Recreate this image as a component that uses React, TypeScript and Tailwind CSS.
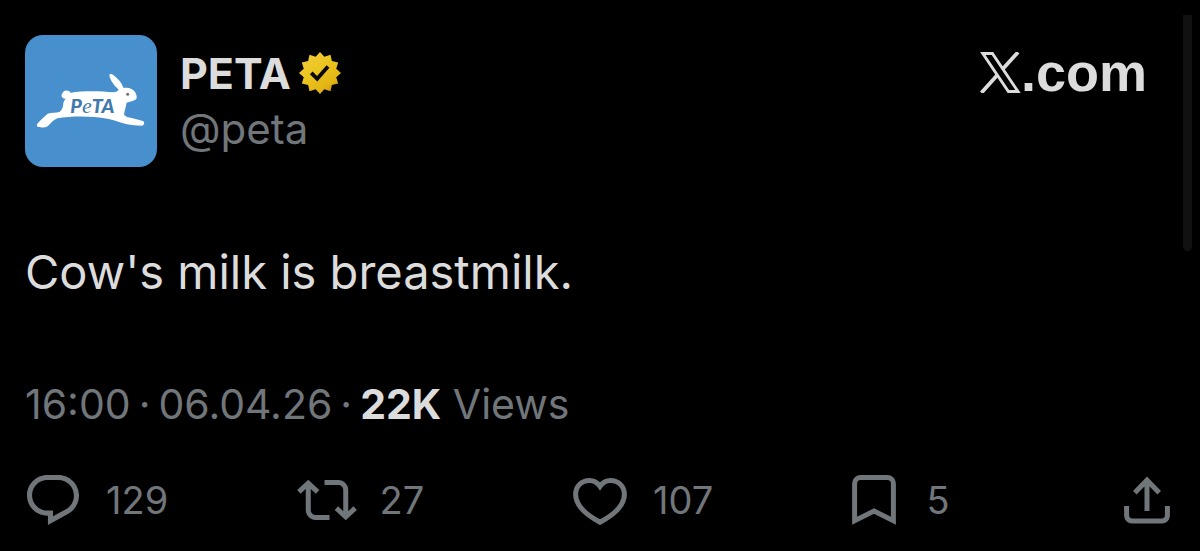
import type { ReactNode } from "react";

function RabbitLogo() {
  return (
    <svg viewBox="30 28 396 396" className="block h-full w-full" aria-hidden="true">
      <path
        fill="#fff"
        d="M150 195c8-1 14 2 17 6 38-6 90-5 128-1 9-1 13-4 16-8-13-12-26-28-28-44 2-5 8-3 13 1 13 10 25 24 30 38 14-3 28 2 34 12 4 6 6 13 5 19-5 9-18 9-30 13-3 11-5 23-8 35 2 4 6 7 12 9 15 3 31 7 45 11 6 4 4 12-2 14-20 0-42-2-60-8-17-6-31-10-45-13-46-8-108-8-150-1-11 4-20 15-29 24-7 4-16 5-23 2-10 1-12-5-6-12 9-11 19-19 29-28 12-4 24-2 35-5 9-6 12-17 12-27 1-5 4-9 7-13-8 0-14-6-12-12 2-5 5-11 10-12z"
      />
      <circle cx="338" cy="206" r="4.5" fill="#7d6f70" />
      <text x="166" y="261" fill="#4079ae" fontFamily="Lato, sans-serif" fontSize="59" fontWeight="900" fontStyle="italic">
        P<tspan fontFamily="Liberation Serif, serif" fontWeight="400" fontSize="66">e</tspan>TA
      </text>
    </svg>
  );
}

const badgePoints = Array.from({ length: 24 }, (_, i) => {
  const radius = i % 2 === 0 ? 21 : 16.8;
  const angle = (i * Math.PI) / 12;
  return `${(21 + radius * Math.sin(angle)).toFixed(2)},${(21 - radius * Math.cos(angle)).toFixed(2)}`;
}).join(" ");

function GoldBadge() {
  return (
    <svg viewBox="0 0 42 42" className="size-[42px]" role="img" aria-label="Verified organization">
      <defs>
        <linearGradient id="gold" x1="0.1" y1="0" x2="0.8" y2="1">
          <stop offset="0" stopColor="#f0cd3c" />
          <stop offset="0.45" stopColor="#ebc51f" />
          <stop offset="0.8" stopColor="#e3b515" />
          <stop offset="1" stopColor="#c98a12" />
        </linearGradient>
      </defs>
      <polygon points={badgePoints} fill="url(#gold)" />
      <path d="M12.2 20.8l6 6L29 14.4" fill="none" stroke="#0b0800" strokeWidth="3.8" />
    </svg>
  );
}

function XLogo() {
  return (
    <svg viewBox="0 0 41 41" className="h-[41px] w-[41px]" role="img" aria-label="X">
      <g fill="none" stroke="currentColor" strokeWidth="2.9">
        <path d="M2.8 1.5h9.6L38 39.5h-9.6z" />
        <path d="M38 .2L22.3 17.6M17.6 22.8L1.4 40.8" strokeWidth="3.8" />
      </g>
    </svg>
  );
}

function ReplyIcon() {
  return (
    <svg viewBox="1.75 2 20.5 19.7" className="h-[50px] w-[52px]" fill="currentColor" aria-hidden="true">
      <path d="M1.751 10c0-4.42 3.584-8 8.005-8h4.366c4.49 0 8.129 3.64 8.129 8.13 0 2.96-1.607 5.68-4.196 7.11l-8.054 4.46v-3.69h-.067c-4.49.1-8.183-3.51-8.183-8.01zm8.005-6c-3.317 0-6.005 2.69-6.005 6 0 3.37 2.77 6.08 6.138 6.01l.351-.01h1.761v2.3l5.087-2.81c1.951-1.08 3.163-3.13 3.163-5.36 0-3.39-2.744-6.13-6.129-6.13H9.756z" />
    </svg>
  );
}

function RepostIcon() {
  return (
    <svg viewBox="0 0 24 24" className="size-[60px]" fill="currentColor" aria-hidden="true">
      <path d="M4.5 3.88l4.432 4.14-1.364 1.46L5.5 7.55V16c0 1.1.896 2 2 2H13v2H7.5c-2.209 0-4-1.79-4-4V7.55L1.432 9.48.068 8.02 4.5 3.88zM16.5 6H11V4h5.5c2.209 0 4 1.79 4 4v8.45l2.068-1.93 1.364 1.46-4.432 4.14-4.432-4.14 1.364-1.46 2.068 1.93V8c0-1.1-.896-2-2-2z" />
    </svg>
  );
}

function HeartIcon() {
  return (
    <svg viewBox="0 0 54 50" className="h-[50px] w-[54px]" fill="none" stroke="currentColor" strokeWidth="5" aria-hidden="true">
      <path d="M27 11.3C24.6 7.7 20.8 5.5 16.4 5.5 8.9 5.5 2.6 11 2.6 19.6 2.6 31.4 14.6 40.6 27 47.2 39.4 40.6 51.4 31.4 51.4 19.6 51.4 11 45.1 5.5 37.6 5.5 33.2 5.5 29.4 7.7 27 11.3z" />
    </svg>
  );
}

function BookmarkIcon() {
  return (
    <svg viewBox="0 0 44 50" className="h-[50px] w-[44px]" fill="none" stroke="currentColor" strokeWidth="5" aria-hidden="true">
      <path d="M2.6 45.8V8.5a6 6 0 0 1 6-6h26.8a6 6 0 0 1 6 6v37.3L22 36z" />
    </svg>
  );
}

function ShareIcon() {
  return (
    <svg viewBox="0 0 46 50" className="h-[50px] w-[46px]" fill="none" stroke="currentColor" strokeWidth="5" aria-hidden="true">
      <path d="M23 36V5M10.8 17.8L23 5.2l12.2 12.6M2.6 31v9.5a5.5 5.5 0 0 0 5.5 5.5h29.8a5.5 5.5 0 0 0 5.5-5.5V31" />
    </svg>
  );
}

function Action({ label, icon, count }: { label: string; icon: ReactNode; count?: string }) {
  return (
    <button type="button" aria-label={label} className="flex items-center gap-[23px]">
      <span className="flex size-[60px] shrink-0 items-center justify-center">{icon}</span>
      {count && <span className="text-[38px] leading-[62px]">{count}</span>}
    </button>
  );
}

export default function App() {
  return (
    <main className="relative min-h-screen bg-black font-[Inter,sans-serif] text-[#dcdcdc]">
      <article className="pt-[35px]">
        <header className="flex items-start justify-between pr-[53px] pl-[25px]">
          <div className="flex gap-[23px]">
            <a href="#peta" aria-label="PETA profile" className="block size-[132px] shrink-0 overflow-hidden rounded-[18px] bg-[#478fcd]">
              <RabbitLogo />
            </a>
            <div className="pt-[10px]">
              <div className="flex items-center gap-2">
                <h1 className="text-[43px] leading-[56px] font-bold">PETA</h1>
                <GoldBadge />
              </div>
              <a href="#peta" className="block text-[42px] leading-[56px] text-[#71767b]">
                @peta
              </a>
            </div>
          </div>
          <div className="flex items-center pt-[17px]">
            <XLogo />
            <span className="font-['Liberation_Sans',Arial,sans-serif] text-[54px] leading-[41px] font-bold">.com</span>
          </div>
        </header>

        <p className="mt-[75px] px-[25px] text-[47px] leading-[60px]">Cow's milk is breastmilk.</p>

        <div className="mt-[72px] flex flex-wrap gap-x-2 px-[25px] text-[41px] leading-[60px] text-[#71767b]">
          <time dateTime="16:00">16:00</time>
          <span>·</span>
          <time dateTime="2026-04-06">06.04.26</time>
          <span>·</span>
          <span>
            <strong className="font-bold text-[#dcdcdc]">22K</strong> Views
          </span>
        </div>

        <div className="mt-[35px] grid grid-cols-[repeat(4,1fr)_60px] px-[23px] text-[#71767b]">
          <Action label="Reply" icon={<ReplyIcon />} count="129" />
          <Action label="Repost" icon={<RepostIcon />} count="27" />
          <Action label="Like" icon={<HeartIcon />} count="107" />
          <Action label="Bookmark" icon={<BookmarkIcon />} count="5" />
          <Action label="Share" icon={<ShareIcon />} />
        </div>
      </article>
      <div className="absolute top-[15px] right-2 h-[236px] w-[9px] rounded-b-full bg-[#111]" />
    </main>
  );
}
